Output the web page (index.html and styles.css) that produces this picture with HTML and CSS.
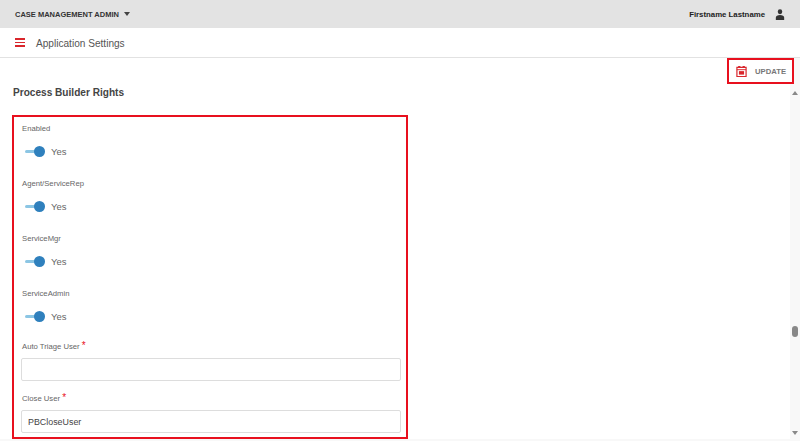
FILE: index.html
```html
<!DOCTYPE html>
<html lang="en">

<head>
	<meta charset="UTF-8">
	<title>Application Settings</title>
	<link rel="stylesheet" href="styles.css">
</head>

<body>
	<header class="topbar">
		<div class="app-name">CASE MANAGEMENT ADMIN <span class="caret"></span></div>
		<div class="user">
			<span>Firstname Lastname</span>
			<svg class="user-icon" viewBox="0 0 12 12" width="10" height="11" preserveAspectRatio="none">
				<circle cx="6" cy="3" r="2.7" fill="#333"></circle>
				<path d="M1 12V9.6C1 7.8 3 6.6 6 6.6S11 7.8 11 9.6V12Z" fill="#333"></path>
			</svg>
		</div>
	</header>
	<div class="titlebar">
		<div class="menu-icon"><span></span><span></span><span></span></div>
		<div class="page-title">Application Settings</div>
	</div>
	<main class="content">
		<div class="scroll-area">
			<div class="toolbar">
				<button type="button" class="update-btn">
					<svg viewBox="0 0 12 12" width="11" height="11">
						<path d="M1 1.5H3V0.5H4.2V1.5H7.8V0.5H9V1.5H11V11.5H1Z" fill="none" stroke="#d9262c" stroke-width="1.3"></path>
						<path d="M1 4H11" stroke="#d9262c" stroke-width="1"></path>
						<rect x="3.2" y="5.6" width="5.6" height="3.8" fill="#d9262c"></rect>
					</svg>
					<span>UPDATE</span>
				</button>
			</div>
			<h2 class="section-title">Process Builder Rights</h2>
			<form class="rights-box">
				<div class="toggle-field">
					<div class="field-label">Enabled</div>
					<div class="toggle-row"><span class="toggle"></span><span>Yes</span></div>
				</div>
				<div class="toggle-field">
					<div class="field-label">Agent/ServiceRep</div>
					<div class="toggle-row"><span class="toggle"></span><span>Yes</span></div>
				</div>
				<div class="toggle-field">
					<div class="field-label">ServiceMgr</div>
					<div class="toggle-row"><span class="toggle"></span><span>Yes</span></div>
				</div>
				<div class="toggle-field">
					<div class="field-label">ServiceAdmin</div>
					<div class="toggle-row"><span class="toggle"></span><span>Yes</span></div>
				</div>
				<div class="text-field">
					<label class="field-label" for="autoTriage">Auto Triage User <span class="req">*</span></label>
					<input type="text" id="autoTriage">
				</div>
				<div class="text-field">
					<label class="field-label" for="closeUser">Close User <span class="req">*</span></label>
					<input type="text" id="closeUser" value="PBCloseUser">
				</div>
			</form>
		</div>
		<div class="scrollbar">
			<span class="arrow-up"></span>
			<span class="thumb"></span>
			<span class="arrow-down"></span>
		</div>
	</main>
</body>

</html>
```

FILE: styles.css
```css
*
{
	box-sizing: border-box;
}

body
{
	font-family: 'Liberation Sans', sans-serif;
	background-color: #fff;
	color: #555;
	height: 441px;
	margin: 0;
	overflow: hidden;
}

.topbar
{
	display: flex;
	justify-content: space-between;
	align-items: center;
	height: 28px;
	padding: 0 15px;
	background-color: #e3e3e3;
	color: #333;
}

.app-name
{
	display: flex;
	align-items: center;
	font-size: 7.5px;
	font-weight: 700;
}

.caret
{
	width: 0;
	height: 0;
	margin-left: 5px;
	border-left: 3.5px solid transparent;
	border-right: 3.5px solid transparent;
	border-top: 4px solid #444;
}

.user
{
	display: flex;
	align-items: center;
	gap: 10px;
	font-size: 7.8px;
	font-weight: 700;
	color: #222;
}

.titlebar
{
	display: flex;
	align-items: center;
	height: 30px;
	padding-left: 15px;
	border-bottom: 1px solid #e2e2e2;
}

.menu-icon
{
	display: flex;
	flex-direction: column;
	gap: 2px;
	width: 10px;
}

.menu-icon span
{
	height: 1.5px;
	background-color: #d9262c;
}

.page-title
{
	margin: 1px 0 0 11px;
	font-size: 10.1px;
	color: #555;
}

.content
{
	display: flex;
	height: 383px;
	border-bottom: 2px solid #f8f8f8;
}

.scroll-area
{
	flex: 1;
	min-width: 0;
}

.toolbar
{
	display: flex;
	justify-content: flex-end;
	margin-right: -4px;
}

.update-btn
{
	position: relative;
	z-index: 1;
	display: flex;
	align-items: center;
	gap: 8px;
	width: 67px;
	height: 26px;
	padding: 0 0 0 7px;
	border: 2px solid #e8101e;
	background-color: #fff;
	color: #777;
	font-family: inherit;
	font-size: 7.7px;
	font-weight: 700;
}

.section-title
{
	margin: 3px 0 0 13px;
	font-size: 10.1px;
	font-weight: 700;
	color: #444;
}

.rights-box
{
	width: 396px;
	height: 324px;
	margin: 17px 0 0 12px;
	padding: 7px 7px 0 8px;
	border: 2px solid #e8101e;
}

.toggle-field
{
	height: 55px;
}

.toggle-field:nth-child(4)
{
	height: 53px;
}

.field-label
{
	display: block;
	font-size: 7.7px;
	color: #666;
}

.toggle-row
{
	display: flex;
	align-items: center;
	gap: 6px;
	margin-top: 13px;
	font-size: 9.5px;
	color: #666;
}

.toggle
{
	position: relative;
	display: block;
	width: 20px;
	height: 3px;
	margin-left: 3px;
	border-radius: 2px;
	background-color: #8cc6e4;
}

.toggle::after
{
	content: "";
	position: absolute;
	right: 0;
	top: -4px;
	width: 11px;
	height: 11px;
	border-radius: 50%;
	background-color: #2f80bd;
}

.text-field
{
	height: 52px;
}

.req
{
	font-size: 10px;
	line-height: 0;
	color: #e8101e;
}

.text-field input
{
	display: block;
	width: 380px;
	height: 23px;
	margin: 7px 0 0 -1px;
	padding: 0 6px;
	border: 1px solid #ddd;
	border-radius: 2px;
	font-family: inherit;
	font-size: 8.9px;
	color: #444;
}

.scrollbar
{
	position: relative;
	width: 10px;
	background-color: #f8f8f8;
}

.arrow-up,
.arrow-down
{
	position: absolute;
	left: 2px;
	width: 0;
	height: 0;
	border-left: 3.5px solid transparent;
	border-right: 3.5px solid transparent;
}

.arrow-up
{
	top: 33px;
	border-bottom: 4px solid #888;
}

.arrow-down
{
	bottom: 4px;
	border-top: 4px solid #888;
}

.thumb
{
	position: absolute;
	top: 268px;
	left: 2px;
	width: 6px;
	height: 11px;
	border-radius: 3px;
	background-color: #888;
}
```
